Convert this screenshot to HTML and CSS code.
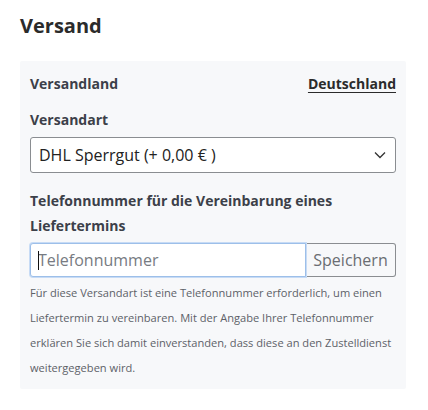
FILE: index.html
```html
<!DOCTYPE html>
<html lang="de">
<head>
  <meta charset="UTF-8" />
  <meta name="viewport" content="width=device-width, initial-scale=1.0"/>
  <title>Versand</title>
  <link rel="stylesheet" href="styles.css">
</head>
<body>
  <div class="checkout">
    <h2 class="section-title">Versand</h2>

    <div class="shipping-box">
      <div class="row">
        <span class="label">Versandland</span>
        <a class="country-link" href="#">Deutschland</a>
      </div>

      <div class="field">
        <label class="label" for="method">Versandart</label>
        <div class="select">
          <span>DHL Sperrgut (+ 0,00 € )</span>
          <svg class="chevron" width="12" height="8" viewBox="0 0 12 8">
            <polyline points="1,1.5 6,6.5 11,1.5" fill="none" stroke="#333" stroke-width="1.3"/>
          </svg>
        </div>
      </div>

      <div class="field">
        <label class="label" for="phone">Telefonnummer für die Vereinbarung eines Liefertermins</label>
        <div class="input-group">
          <div class="phone-wrap">
            <input id="phone" class="phone" type="text" placeholder="Telefonnummer">
            <span class="caret"></span>
          </div>
          <button class="save-btn">Speichern</button>
        </div>
        <p class="hint">Für diese Versandart ist eine Telefonnummer erforderlich, um einen Liefertermin zu vereinbaren. Mit der Angabe Ihrer Telefonnummer erklären Sie sich damit einverstanden, dass diese an den Zustelldienst weitergegeben wird.</p>
      </div>
    </div>
  </div>
</body>
</html>
```

FILE: styles.css
```css
body {
  margin: 0;
  font-family: "Open Sans", "DejaVu Sans", sans-serif;
  color: #333;
  background: #fff;
}

.checkout {
  padding: 11px 22px 0 20px;
}

.section-title {
  margin: 0 0 20px;
  font-size: 20px;
  line-height: 30px;
  font-weight: 700;
  color: #2b2b2b;
}

.shipping-box {
  background: #f7f8fa;
  padding: 10px 10px 9px;
  border-radius: 2px;
}

.row {
  display: flex;
  justify-content: space-between;
  line-height: 25px;
}

.label {
  display: block;
  font-size: 14px;
  font-weight: 700;
  line-height: 25px;
  color: #3c4049;
}

.country-link {
  font-size: 14px;
  font-weight: 700;
  color: #2b2b2b;
  text-decoration: underline;
  text-underline-offset: 3px;
}

.field {
  margin-top: 11px;
}

.field + .field {
  margin-top: 15px;
}

.field .label {
  margin-bottom: 5px;
}

.select {
  display: flex;
  align-items: center;
  justify-content: space-between;
  height: 36px;
  box-sizing: border-box;
  padding: 0 8px;
  background: #fff;
  border: 1px solid #8a8d91;
  border-radius: 3px;
  font-size: 16px;
  color: #222;
}

.chevron {
  margin-right: 1px;
}

.input-group {
  display: flex;
  height: 34px;
}

.phone-wrap {
  position: relative;
  flex: 1;
}

.phone {
  width: 100%;
  height: 100%;
  box-sizing: border-box;
  padding: 0 7px;
  font-family: inherit;
  font-size: 16px;
  border: 1px solid #9dbfe9;
  border-radius: 3px 0 0 3px;
  box-shadow: 0 0 0 1px #c7dbf5;
  outline: none;
}

.phone::placeholder {
  color: #777b82;
}

.caret {
  position: absolute;
  left: 8px;
  top: 8px;
  width: 1px;
  height: 19px;
  background: #111;
}

.save-btn {
  width: 90px;
  font-family: inherit;
  font-size: 16px;
  color: #6a6d72;
  background: #f7f8fa;
  border: 1px solid #8a8d91;
  border-left: none;
  border-radius: 0 3px 3px 0;
  padding: 0;
}

.hint {
  margin: 3px 0 0;
  font-size: 11.1px;
  line-height: 25px;
  color: #5d6168;
}
```
